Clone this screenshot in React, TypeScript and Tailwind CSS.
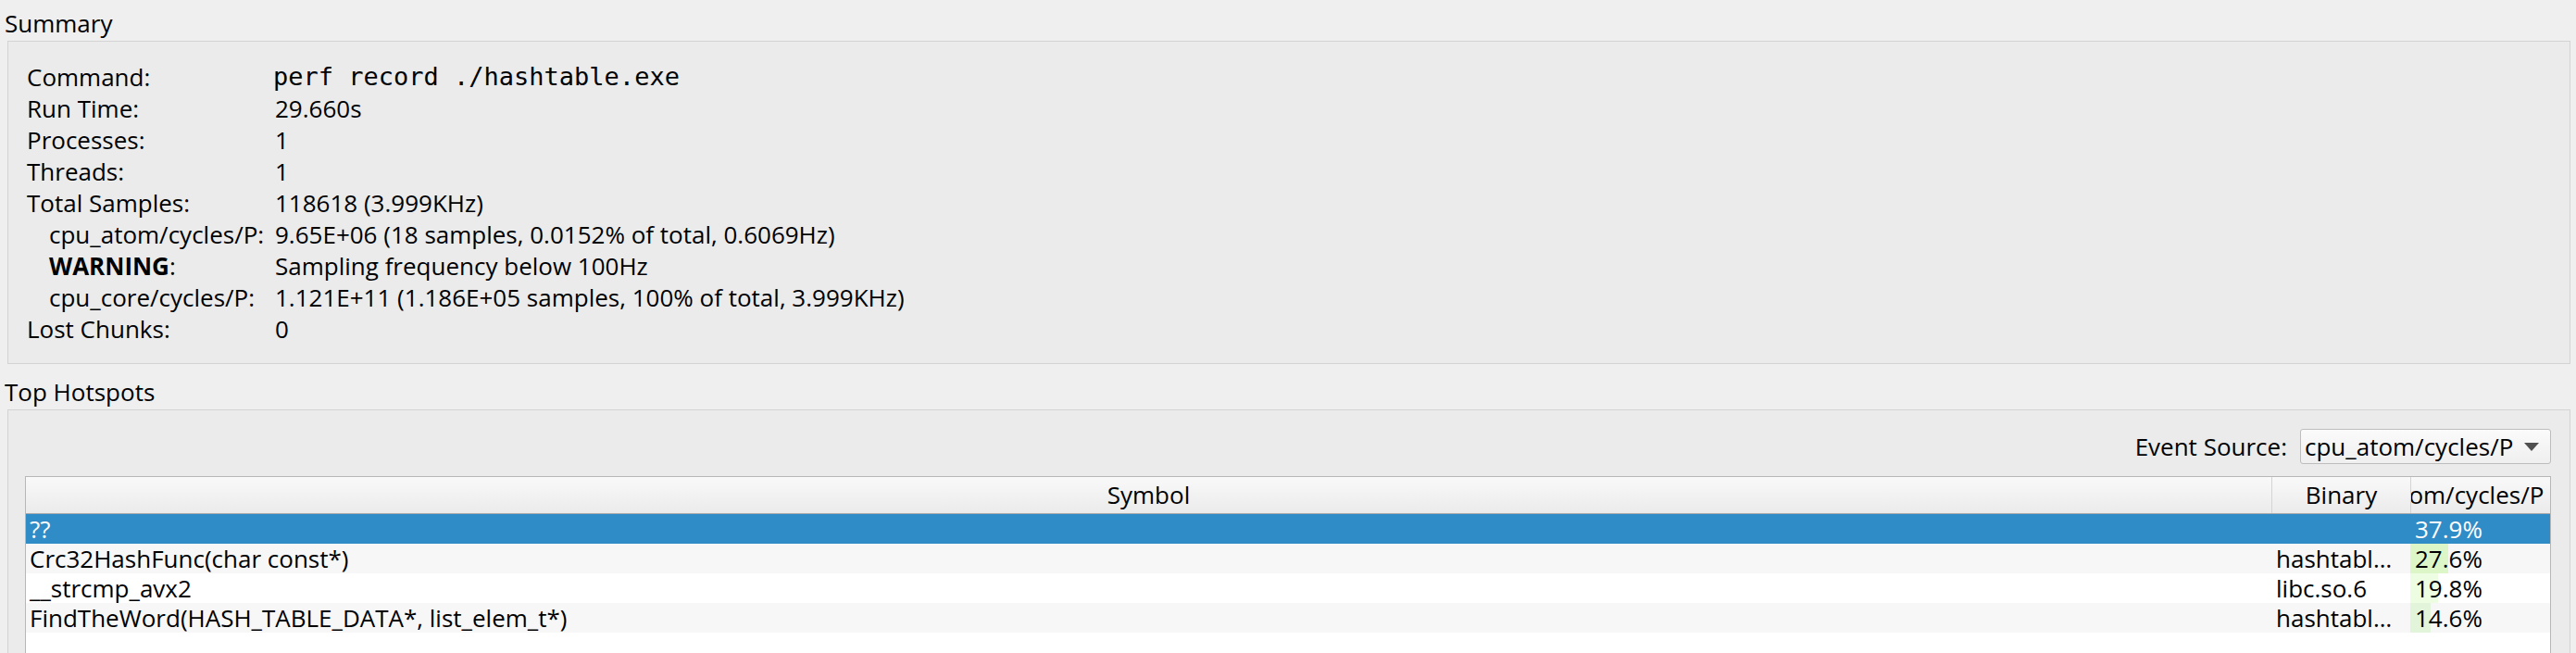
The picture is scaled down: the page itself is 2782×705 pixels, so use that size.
import React from 'react';

interface SummaryRow {
  label: React.ReactNode;
  value: React.ReactNode;
  indent?: boolean;
  mono?: boolean;
}

interface Hotspot {
  symbol: string;
  binary: string;
  cost: number;
  bar: string;
}

const summaryRows: SummaryRow[] = [
  { label: 'Command:', value: 'perf record ./hashtable.exe', mono: true },
  { label: 'Run Time:', value: '29.660s' },
  { label: 'Processes:', value: '1' },
  { label: 'Threads:', value: '1' },
  { label: 'Total Samples:', value: '118618 (3.999KHz)' },
  { label: 'cpu_atom/cycles/P:', value: '9.65E+06 (18 samples, 0.0152% of total, 0.6069Hz)', indent: true },
  {
    label: (
      <>
        <span className="font-bold">WARNING</span>:
      </>
    ),
    value: 'Sampling frequency below 100Hz',
    indent: true,
  },
  { label: 'cpu_core/cycles/P:', value: '1.121E+11 (1.186E+05 samples, 100% of total, 3.999KHz)', indent: true },
  { label: 'Lost Chunks:', value: '0' },
];

const hotspots: Hotspot[] = [
  { symbol: '??', binary: '', cost: 37.9, bar: '#308cc6' },
  { symbol: 'Crc32HashFunc(char const*)', binary: 'hashtabl…', cost: 27.6, bar: '#ddf6c8' },
  { symbol: '__strcmp_avx2', binary: 'libc.so.6', cost: 19.8, bar: '#ecfde1' },
  { symbol: 'FindTheWord(HASH_TABLE_DATA*, list_elem_t*)', binary: 'hashtabl…', cost: 14.6, bar: '#e2f4da' },
];

function SectionTitle({ children, className = '' }: { children: React.ReactNode; className?: string }) {
  return <div className={`h-[44px] pt-[7px] pl-[5px] leading-[36px] ${className}`}>{children}</div>;
}

export default function App() {
  return (
    <div className="w-[2782px] h-[705px] overflow-hidden bg-[#efefef] text-[26px] text-black font-['Open_Sans',sans-serif]">
      <SectionTitle>Summary</SectionTitle>

      {/* Summary group box */}
      <div className="ml-[8px] w-[2768px] border border-[#d3d3d3] bg-[#ebebeb] pt-[21px] pb-[20px] pl-[20px]">
        {summaryRows.map((row, i) => (
          <div key={i} className="grid grid-cols-[268px_1fr] h-[34px] leading-[34px] whitespace-nowrap">
            <div className={row.indent ? 'pl-[24px]' : ''}>{row.label}</div>
            <div className={row.mono ? "font-['DejaVu_Sans_Mono',monospace] text-[27px] -ml-[2px]" : ''}>{row.value}</div>
          </div>
        ))}
      </div>

      <SectionTitle className="mt-[5px]">Top Hotspots</SectionTitle>

      {/* Top hotspots group box */}
      <div className="ml-[8px] w-[2768px] h-[300px] border-t border-x border-[#d3d3d3] bg-[#ebebeb] pt-[20px] pl-[18px] pr-[20px]">
        <div className="flex justify-end items-center h-[38px] gap-[14px]">
          <span className="leading-[38px]">Event Source:</span>
          <div className="w-[271px] h-[38px] flex items-center justify-between border border-[#bdbdbd] rounded-[3px] bg-linear-to-b from-[#fbfbfb] to-[#efefef] pl-[4px] pr-[12px]">
            <span className="leading-[36px]">cpu_atom/cycles/P</span>
            <svg width="16" height="9" viewBox="0 0 16 9">
              <polygon points="0,0 16,0 8,9" fill="#505050" />
            </svg>
          </div>
        </div>

        {/* Table */}
        <div className="mt-[13px] h-[220px] border border-[#b7b7b7] bg-white overflow-hidden">
          <div className="grid grid-cols-[2425px_150px_150px] h-[40px] border-b border-[#a9a9a9] bg-linear-to-b from-[#f9f9f9] to-[#ebebeb] leading-[39px]">
            <div className="text-center">Symbol</div>
            <div className="border-l border-[#d4d4d4] text-center">Binary</div>
            <div className="border-l border-[#d4d4d4] overflow-hidden whitespace-nowrap">
              <span className="block -ml-[82px]">cpu_atom/cycles/P</span>
            </div>
          </div>

          {hotspots.map((h, i) => {
            const selected = i === 0;
            const rowBg = selected ? 'bg-[#308cc6] text-white' : i % 2 === 1 ? 'bg-[#f7f7f7]' : 'bg-white';
            return (
              <div key={i} className={`grid grid-cols-[2425px_150px_150px] h-[32px] leading-[32px] whitespace-nowrap ${rowBg}`}>
                <div className="pl-[4px]">{h.symbol}</div>
                <div className="pl-[5px]">{h.binary}</div>
                <div className="relative pl-[5px]">
                  {!selected && (
                    <div
                      className="absolute left-0 top-0 bottom-0"
                      style={{ width: `${(h.cost / 100) * 150}px`, backgroundColor: h.bar }}
                    />
                  )}
                  <span className="relative">{h.cost.toFixed(1)}%</span>
                </div>
              </div>
            );
          })}
        </div>
      </div>
    </div>
  );
}
